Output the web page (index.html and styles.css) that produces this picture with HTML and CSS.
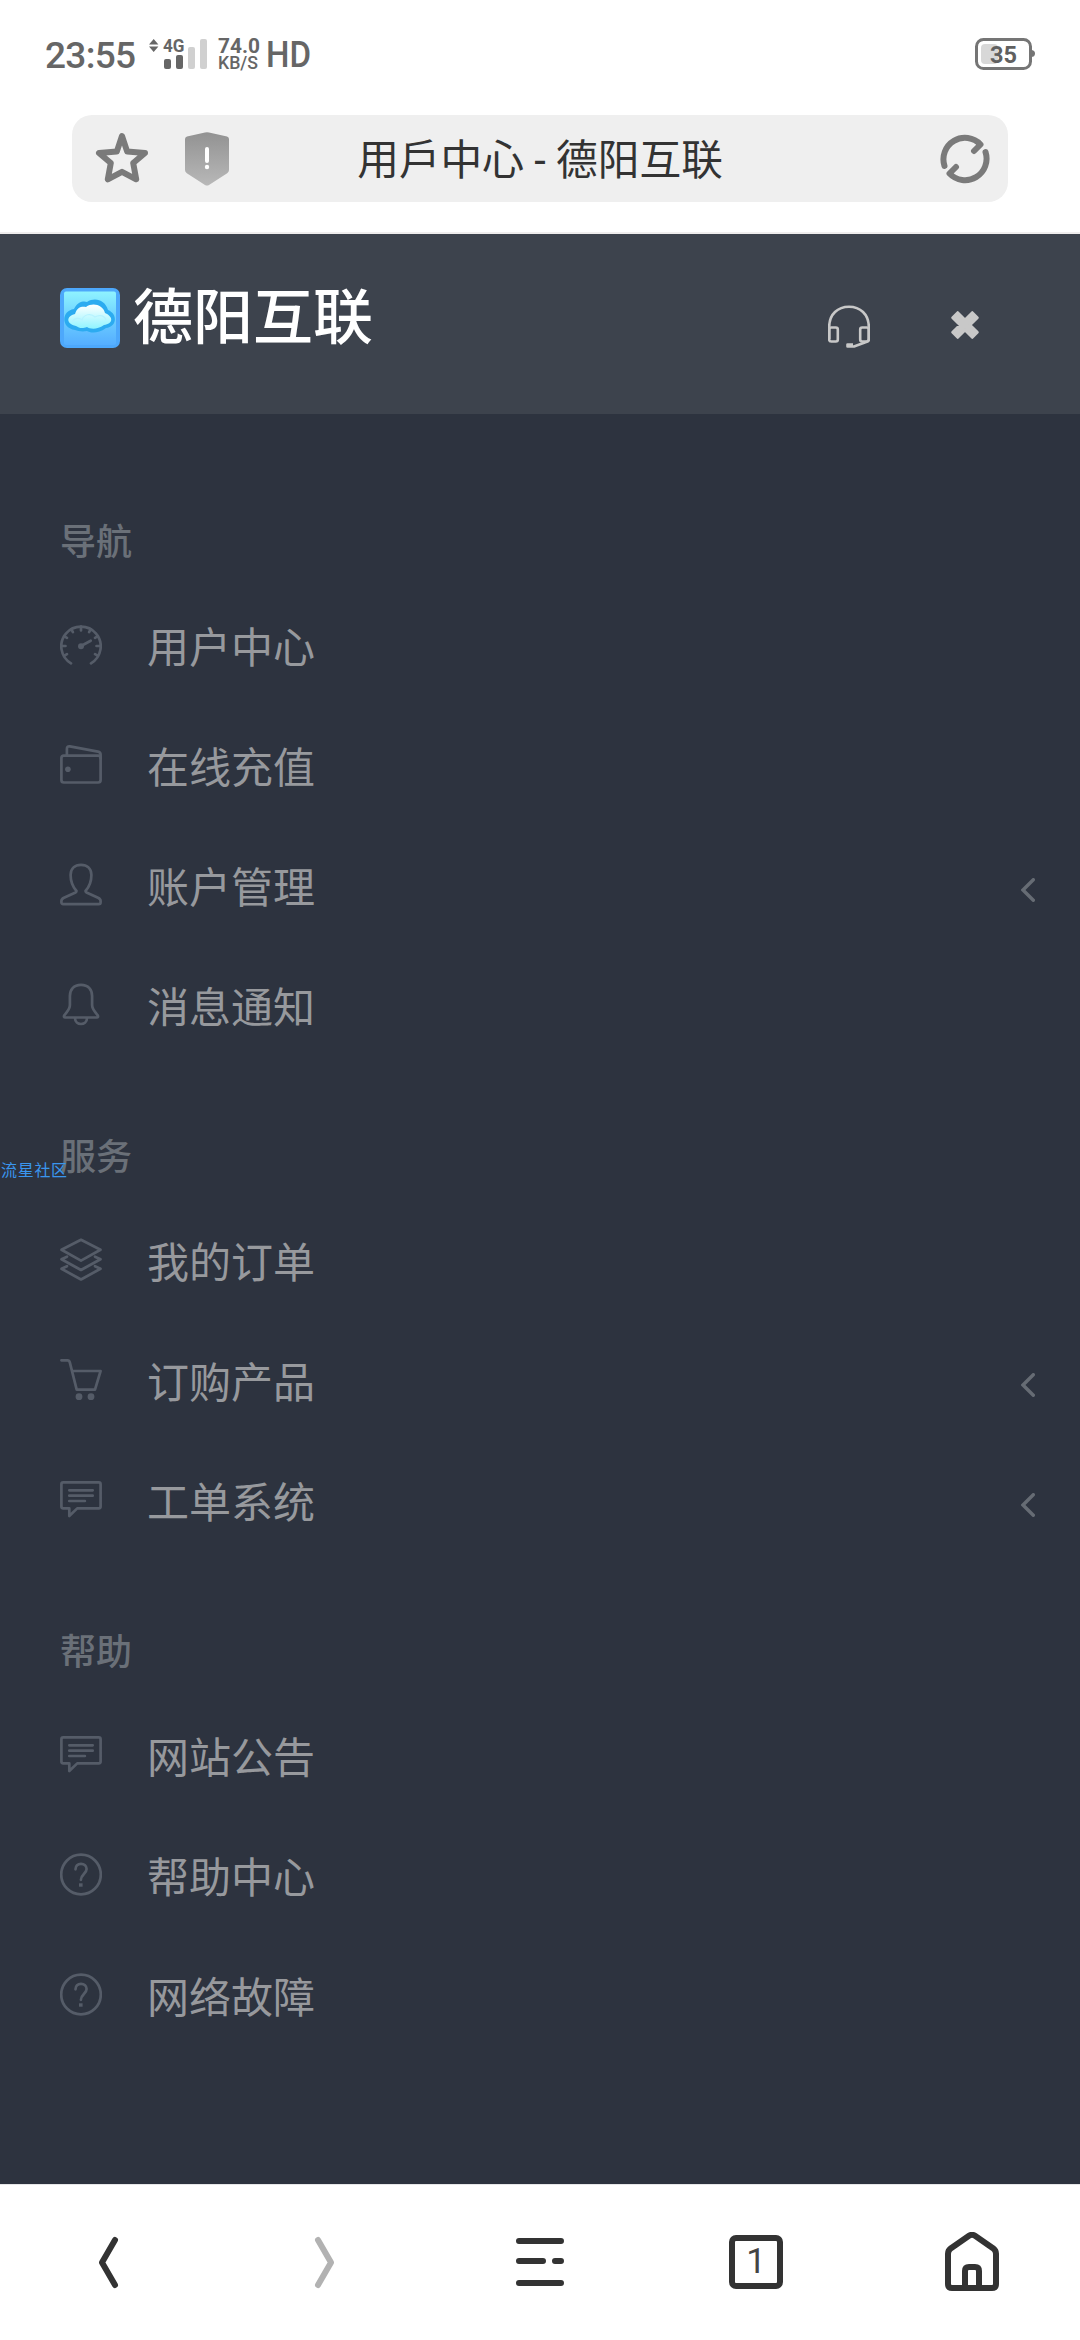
FILE: index.html
```html
<!DOCTYPE html>
<html lang="zh-CN">
<head>
    <meta charset="UTF-8">
    <meta name="viewport" content="width=device-width, initial-scale=1.0">
    <title>用户中心 - 德阳互联</title>
    <link rel="stylesheet" href="styles.css">
</head>
<body>
    <!-- shared icons -->
    <svg class="sprite" width="0" height="0">
        <symbol id="i-gauge" viewBox="0 0 42 43">
            <path d="M11 40.3A19.7 19.7 0 1 1 31 40.3"/>
            <path d="M21 3.5v4M11.2 6.1l1.7 3M30.8 6.1l-1.7 3M4 13.2l3 1.7M38 13.2l-3 1.7M1.5 23h4M40.5 23h-4M4 32.8l3-1.7M38 32.8l-3-1.7M21 23l9.7-5.3"/>
            <circle class="solid" cx="21" cy="23.2" r="3"/>
        </symbol>
        <symbol id="i-wallet" viewBox="0 0 42 43">
            <rect x="1.4" y="12.7" width="39.2" height="26.8" rx="2.5"/>
            <path d="M6.9 12.5V6q0-3 3-2.6l28 5.2q2.7.6 2.7 3v4"/>
            <circle class="solid" cx="7.9" cy="26.3" r="2.8"/>
        </symbol>
        <symbol id="i-user" viewBox="0 0 42 43">
            <path d="M16.5 28C12 23 10.6 17 10.6 12 10.6 5.3 15 1.9 21 1.9S31.4 5.3 31.4 12c0 5-1.4 11-5.9 16q0 1 1 1.5L38 34.8q2.6 1.2 2.6 3.2v1.2q0 1.9-1.9 1.9H3.3q-1.9 0-1.9-1.9V38q0-2 2.6-3.2l11.5-5.3q1-.5 1-1.5z"/>
        </symbol>
        <symbol id="i-bell" viewBox="0 0 42 43">
            <path d="M21 1.9C13.5 1.9 9.9 7 9.9 13v9c0 5-4 7.5-5.7 10.5q-.8 2 1 2h31.6q1.8 0 1-2C36.1 29.5 32.1 27 32.1 22v-9C32.1 7 28.5 1.9 21 1.9zM15 35c0 8 12 8 12 0"/>
        </symbol>
        <symbol id="i-layers" viewBox="0 0 42 43">
            <path d="M21 1.8l19.5 10L21 22.6 1.5 11.8zM35 18.7l5.5 2.6L21 32 1.5 21.3 7 18.7M35 28.2l5.5 2.6L21 41.5 1.5 30.8 7 28.2"/>
        </symbol>
        <symbol id="i-cart" viewBox="0 0 42 43">
            <path d="M1.4 2.3H7.5q1.8 0 2.3 2L16.7 31.6H35L40.6 13H12.5"/>
            <circle class="solid" cx="19" cy="38.7" r="3.4"/>
            <circle class="solid" cx="31" cy="38.7" r="3.4"/>
        </symbol>
        <symbol id="i-comment" viewBox="0 0 42 43">
            <path d="M3.2 4.4h35.6q1.8 0 1.8 1.8v22.4q0 1.8-1.8 1.8H17.2L9.3 38V30.4H3.2q-1.8 0-1.8-1.8V6.2q0-1.8 1.8-1.8zM9.3 12.3h23.4M9.3 17.7h23.4M9.3 23h15.6"/>
        </symbol>
        <symbol id="i-question" viewBox="0 0 42 43">
            <circle cx="21" cy="21.5" r="19.8"/>
            <path d="M15.5 16.3c0-3.7 2.3-5.5 5.5-5.5s5.6 1.9 5.6 5.2c0 4.6-5.7 5.6-5.7 10.8"/>
            <path class="solid" d="M19 30.3h3.6v3.4H19z"/>
        </symbol>
        <symbol id="i-angle" viewBox="0 0 14 24">
            <path d="M12.3 1.7L2 12l10.3 10.3"/>
        </symbol>
    </svg>

    <div class="status-bar">
        <span class="time">23:55</span>
        <svg class="signal" width="170" height="46" viewBox="148 30 170 46">
            <path d="M149 44.5l4.7-5.5 4.7 5.5zM149 46.5h9.4l-4.7 5.5z"/>
            <text class="net" x="163" y="51.5" textLength="21.5" lengthAdjust="spacingAndGlyphs">4G</text>
            <rect x="164" y="59" width="7" height="10" rx="2"/>
            <rect x="176" y="55" width="7" height="14" rx="2"/>
            <rect class="off" x="188" y="47" width="7" height="22" rx="2"/>
            <rect class="off" x="200" y="39" width="7" height="30" rx="2"/>
            <text class="speed" x="218" y="53" textLength="42" lengthAdjust="spacingAndGlyphs">74.0</text>
            <text class="unit" x="218" y="69" textLength="40" lengthAdjust="spacingAndGlyphs">KB/S</text>
            <text class="hd" x="266" y="67" textLength="45" lengthAdjust="spacingAndGlyphs">HD</text>
        </svg>
        <svg class="battery" width="61" height="34" viewBox="0 0 61 34">
            <rect class="level" x="6" y="7" width="17" height="20" rx="4"/>
            <rect class="shell" x="1.5" y="2.5" width="54" height="29" rx="7"/>
            <path class="tip" d="M56 13q4 0 4 3.5T56 20z"/>
            <text x="28.5" y="25.5" text-anchor="middle">35</text>
        </svg>
    </div>

    <div class="address-bar">
        <svg class="star" width="54" height="54" viewBox="0 0 54 54">
            <path d="M27 4L32.2 19.6 50 21 38.2 31 41.2 47.3 27 39.8 12.8 47.3 15.8 31 4 21 21.8 19.6z"/>
        </svg>
        <svg class="shield" width="44" height="54" viewBox="0 0 44 54">
            <defs>
                <linearGradient id="shieldFill" x1="0" y1="0" x2="0" y2="1">
                    <stop offset="0" stop-color="#929292"/>
                    <stop offset="1" stop-color="#b8b8b8"/>
                </linearGradient>
            </defs>
            <path fill="url(#shieldFill)" d="M20 .5q2-.6 4 0l18 4q2 .5 2 2.5V38q0 2-1.8 3.2L24 53q-2 1.2-4 0L1.8 41.2Q0 40 0 38V7q0-2 2-2.5z"/>
            <rect x="20" y="15" width="4" height="16" rx="2" fill="#fff"/>
            <circle cx="22" cy="35" r="2.2" fill="#fff"/>
        </svg>
        <div class="page-title"><span class="trad" lang="ja">用戶中心</span> - 德阳互联</div>
        <svg class="reload" width="50" height="50" viewBox="0 0 50 50">
            <path d="M4.5 32A21.5 21.5 0 0 1 40.5 10.5L34 17"/>
            <path d="M45.5 18A21.5 21.5 0 0 1 9.5 39.5L16 33"/>
        </svg>
    </div>

    <div class="header">
        <svg class="logo" width="60" height="60" viewBox="0 0 60 60">
            <defs>
                <linearGradient id="logoFill" x1="0" y1="0" x2="0" y2="1">
                    <stop offset="0" stop-color="#8ff3ff"/>
                    <stop offset=".45" stop-color="#6fd2ff"/>
                    <stop offset="1" stop-color="#55aeff"/>
                </linearGradient>
                <linearGradient id="cloudFill" x1="0" y1="0" x2="0" y2="1">
                    <stop offset="0" stop-color="#ffffff"/>
                    <stop offset="1" stop-color="#8ff4ff"/>
                </linearGradient>
            </defs>
            <rect width="60" height="60" rx="7" fill="#4da8fb"/>
            <rect x="4" y="3.5" width="52" height="53.5" rx="2" fill="url(#logoFill)"/>
            <path d="M15 42C1 40 1 23 14 21 18 13 24 13 27 14 35 9 45 12 48 22 58 26 57 39 46 40 38 46 30 45 27 43 22 44 18 43 15 42z" fill="#2cabf0"/>
            <path d="M16 38C6 36 6 28 15 26 17 19 22 18 26 19 33 14 43 17 45 25 54 29 53 36 44 37 37 42 30 41 27 39 22 41 19 40 16 38z" fill="url(#cloudFill)"/>
            <path d="M12 34c3-5 8-4 10-2 2-6 9-7 13-3 5-3 10-1 11 3" fill="none" stroke="#b5f2ff" stroke-width="1.2"/>
        </svg>
        <span class="brand">德阳互联</span>
        <svg class="headset" width="42" height="44" viewBox="0 0 42 44">
            <path d="M1.2 34V22C1.2 9 10 1.8 21 1.8S40.8 9 40.8 22v12q0 2-2 2.8L26 41.5h-6.5v-2H25"/>
            <rect x="1.2" y="22.5" width="8.6" height="14" rx="2"/>
            <rect x="32.2" y="22.5" width="8.6" height="14" rx="2"/>
        </svg>
        <svg class="close" width="30" height="30" viewBox="0 0 30 30">
            <path d="M19.9 15l7.4 7.3-5 5L15 19.9l-7.3 7.4-5-5L10.1 15 2.7 7.7l5-5L15 10.1l7.3-7.4 5 5z"/>
        </svg>
    </div>

    <div class="sidebar">
        <div class="menu-title">导航</div>
        <ul class="menu">
            <li><svg class="icon"><use href="#i-gauge"/></svg><span>用户中心</span></li>
            <li><svg class="icon"><use href="#i-wallet"/></svg><span>在线充值</span></li>
            <li><svg class="icon"><use href="#i-user"/></svg><span>账户管理</span><svg class="angle"><use href="#i-angle"/></svg></li>
            <li><svg class="icon"><use href="#i-bell"/></svg><span>消息通知</span></li>
        </ul>
        <div class="menu-title">服务</div>
        <ul class="menu">
            <li><svg class="icon"><use href="#i-layers"/></svg><span>我的订单</span></li>
            <li><svg class="icon"><use href="#i-cart"/></svg><span>订购产品</span><svg class="angle"><use href="#i-angle"/></svg></li>
            <li><svg class="icon"><use href="#i-comment"/></svg><span>工单系统</span><svg class="angle"><use href="#i-angle"/></svg></li>
        </ul>
        <div class="menu-title">帮助</div>
        <ul class="menu">
            <li><svg class="icon"><use href="#i-comment"/></svg><span>网站公告</span></li>
            <li><svg class="icon"><use href="#i-question"/></svg><span>帮助中心</span></li>
            <li><svg class="icon"><use href="#i-question"/></svg><span>网络故障</span></li>
        </ul>
    </div>

    <div class="bottom-bar">
        <div class="tab">
            <svg width="54" height="60" viewBox="0 0 54 60"><path d="M34 8L21 30.5 34 53"/></svg>
        </div>
        <div class="tab disabled">
            <svg width="54" height="60" viewBox="0 0 54 60"><path d="M21 8l13 22.5L21 53"/></svg>
        </div>
        <div class="tab">
            <svg width="54" height="60" viewBox="0 0 54 60"><path d="M6 9h42M6 29h24M42 29h6M6 51h42"/></svg>
        </div>
        <div class="tab">
            <div class="tab-count">1</div>
        </div>
        <div class="tab">
            <svg width="54" height="60" viewBox="0 0 54 60">
                <path d="M24 3.8q3-2 6 0l18 12.4q3 2.3 3 5.5V52q0 4-4 4H7q-4 0-4-4V21.7q0-3.2 3-5.5zM20 56V39q0-4 4-4h6q4 0 4 4v17"/>
            </svg>
        </div>
    </div>

    <div class="watermark">流星社区</div>
</body>
</html>
```
FILE: styles.css
```css
body {
    margin: 0;
    padding: 0;
    width: 1080px;
    height: 2340px;
    display: flex;
    flex-direction: column;
    position: relative;
    overflow: hidden;
    background-color: #fff;
    font-family: Roboto, "Noto Sans CJK SC", sans-serif;
}

.sprite {
    position: absolute;
}

/* status bar */
.status-bar {
    height: 115px;
    box-sizing: border-box;
    padding: 30px 44px 0 45px;
    display: flex;
    align-items: flex-start;
    color: #666;
}

.time {
    width: 103px;
    margin-top: 7px;
    font-size: 37px;
    line-height: 38px;
    letter-spacing: -0.7px;
    font-weight: 500;
}

.signal {
    fill: #666;
}

.signal .off {
    fill: #d0d0d0;
}

.signal text {
    font-weight: 500;
}

.signal .net {
    font-size: 17.5px;
    font-weight: 700;
}

.signal .speed {
    font-size: 21px;
    font-weight: 700;
}

.signal .unit {
    font-size: 17.5px;
}

.signal .hd {
    font-size: 37px;
}

.battery {
    margin: 7px 0 0 auto;
}

.battery .level {
    fill: #d8d8d8;
}

.battery .shell {
    fill: none;
    stroke: #757575;
    stroke-width: 3;
}

.battery .tip {
    fill: #757575;
}

.battery text {
    fill: #606060;
    font-size: 23.5px;
    font-weight: 700;
}

/* address bar */
.address-bar {
    margin: 0 72px;
    height: 87px;
    flex-shrink: 0;
    display: flex;
    align-items: center;
    background-color: #efefef;
    border-radius: 20px;
}

.star {
    margin-left: 23px;
    fill: none;
    stroke: #7a7a7a;
    stroke-width: 6;
    stroke-linejoin: round;
}

.shield {
    margin-left: 36px;
}

.page-title {
    flex: 1;
    padding-right: 89px;
    text-align: center;
    color: #333;
    font-size: 41.7px;
    line-height: 60px;
}

.trad {
    font-family: "Noto Sans CJK JP", "Noto Sans CJK TC", sans-serif;
}

.reload {
    margin-right: 18px;
    fill: none;
    stroke: #7a7a7a;
    stroke-width: 6;
    stroke-linecap: round;
    stroke-linejoin: round;
}

/* header */
.header {
    margin-top: 30px;
    height: 182px;
    flex-shrink: 0;
    box-sizing: border-box;
    border-top: 2px solid #efeded;
    padding: 54px 100px 0 60px;
    display: flex;
    align-items: flex-start;
    background-color: #3d434d;
}

.brand {
    margin: 1px 0 0 13px;
    color: #fff;
    font-size: 60px;
    line-height: 60px;
    font-weight: 500;
}

.headset {
    margin: 17px 80px 0 auto;
    fill: none;
    stroke: #c8c8c8;
    stroke-width: 2.6;
    stroke-linejoin: round;
}

.close {
    margin-top: 22px;
    fill: #c8c8c8;
    stroke: #c8c8c8;
    stroke-width: 3;
    stroke-linejoin: round;
}

/* menu */
.sidebar {
    flex: 1;
    padding-top: 38px;
    background-color: #2d333f;
}

.menu-title {
    padding: 64px 60px 17px;
    height: 54px;
    line-height: 54px;
    font-size: 36px;
    font-weight: 500;
    color: #6a7078;
}

.menu {
    list-style: none;
    margin: 0;
    padding: 0;
}

.menu li {
    height: 120px;
    padding: 0 45px 0 60px;
    display: flex;
    align-items: center;
    color: #97999d;
    font-size: 42px;
}

.menu span {
    padding-bottom: 6px;
}

.menu .icon {
    width: 42px;
    height: 43px;
    margin: 0 45px 5px 0;
    fill: none;
    stroke: #555c68;
    stroke-width: 2.7;
    stroke-linecap: round;
    stroke-linejoin: round;
}

.solid {
    fill: #555c68;
    stroke: none;
}

.menu .angle {
    width: 14px;
    height: 24px;
    margin: 5px 0 0 auto;
    fill: none;
    stroke: #666c74;
    stroke-width: 3.4;
    stroke-linecap: round;
}

/* bottom toolbar */
.bottom-bar {
    height: 156px;
    flex-shrink: 0;
    box-sizing: border-box;
    border-top: 1px solid #e6e6e8;
    padding-bottom: 2px;
    display: flex;
    background-color: #fff;
}

.tab {
    flex: 1;
    display: flex;
    align-items: center;
    justify-content: center;
}

.tab svg {
    fill: none;
    stroke: #333;
    stroke-width: 6;
    stroke-linecap: round;
    stroke-linejoin: round;
}

.tab.disabled svg {
    stroke: #b2b2b2;
}

.tab-count {
    width: 54px;
    height: 54px;
    box-sizing: border-box;
    border: 6px solid #333;
    border-radius: 7px;
    color: #444;
    font-size: 35px;
    line-height: 42px;
    text-align: center;
}

.watermark {
    position: absolute;
    left: 1px;
    top: 1160px;
    color: #3a96ee;
    font-size: 16px;
    line-height: 22px;
    letter-spacing: 0.7px;
}
```
